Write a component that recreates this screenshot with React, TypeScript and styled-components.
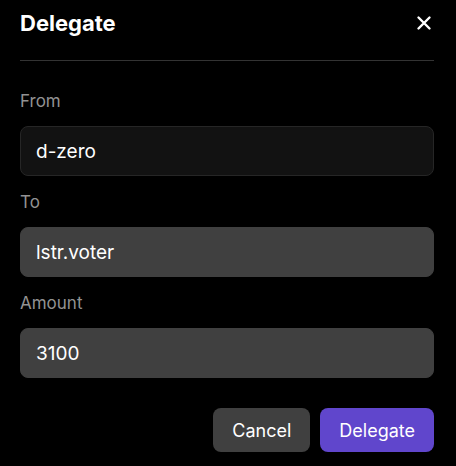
import React, { useState } from "react";
import styled, { createGlobalStyle } from "styled-components";

const GlobalStyle = createGlobalStyle`
  html, body {
    margin: 0;
    padding: 0;
    background: #000;
  }
  body {
    font-family: Inter, "Noto Sans", sans-serif;
    color: #fff;
  }
`;

function App() {
  const [from, setFrom] = useState("d-zero");
  const [to, setTo] = useState("lstr.voter");
  const [amount, setAmount] = useState("3100");

  return (
    <StyledModal>
      <GlobalStyle />
      <Header>
        <Title>Delegate</Title>
        <CloseButton aria-label="close">
          <svg width="16" height="16" viewBox="0 0 16 16">
            <path
              d="M2.5 2.5 L13.5 13.5 M13.5 2.5 L2.5 13.5"
              stroke="#fff"
              strokeWidth="2.4"
              strokeLinecap="round"
            />
          </svg>
        </CloseButton>
      </Header>
      <Divider />
      <Form>
        <Label>From</Label>
        <Input value={from} readOnly onChange={(e) => setFrom(e.target.value)} $dark />
        <Label>To</Label>
        <Input value={to} onChange={(e) => setTo(e.target.value)} />
        <Label>Amount</Label>
        <Input value={amount} onChange={(e) => setAmount(e.target.value)} />
      </Form>
      <Footer>
        <Button>Cancel</Button>
        <Button $primary>Delegate</Button>
      </Footer>
    </StyledModal>
  );
}

export default App;

const StyledModal = styled.div`
  width: 456px;
  height: 466px;
  box-sizing: border-box;
  padding: 0 22px 0 20px;
  background: #000;
  display: flex;
  flex-direction: column;
`;

const Header = styled.div`
  height: 46px;
  display: flex;
  align-items: center;
  justify-content: space-between;
`;

const Title = styled.h2`
  margin: 0;
  font-size: 22px;
  font-weight: 700;
`;

const CloseButton = styled.button`
  background: none;
  border: none;
  padding: 0;
  margin-right: 2px;
  width: 16px;
  height: 16px;
  display: flex;
  cursor: pointer;
`;

const Divider = styled.div`
  height: 1px;
  margin-top: 14px;
  background: #333;
`;

const Form = styled.div`
  display: flex;
  flex-direction: column;
  padding-top: 28px;
`;

const Label = styled.div`
  font-size: 17px;
  line-height: 24px;
  color: #929292;
  margin-bottom: 13px;
`;

const Input = styled.input<{ $dark?: boolean }>`
  box-sizing: border-box;
  height: 50px;
  width: 100%;
  border-radius: 8px;
  border: 1px solid ${(p) => (p.$dark ? "#262626" : "#404040")};
  background: ${(p) => (p.$dark ? "#121212" : "#404040")};
  color: #fff;
  font-family: Inter, "Noto Sans", sans-serif;
  font-size: 19px;
  padding: 0 15px;
  outline: none;
  margin-bottom: 14px;
`;

const Footer = styled.div`
  display: flex;
  justify-content: flex-end;
  gap: 10px;
  margin-top: 16px;
`;

const Button = styled.button<{ $primary?: boolean }>`
  height: 44px;
  padding: 0 19px;
  border: none;
  border-radius: 8px;
  background: ${(p) => (p.$primary ? "#6046cc" : "#404040")};
  color: #fff;
  font-family: Inter, "Noto Sans", sans-serif;
  font-size: 18px;
  cursor: pointer;
`;
